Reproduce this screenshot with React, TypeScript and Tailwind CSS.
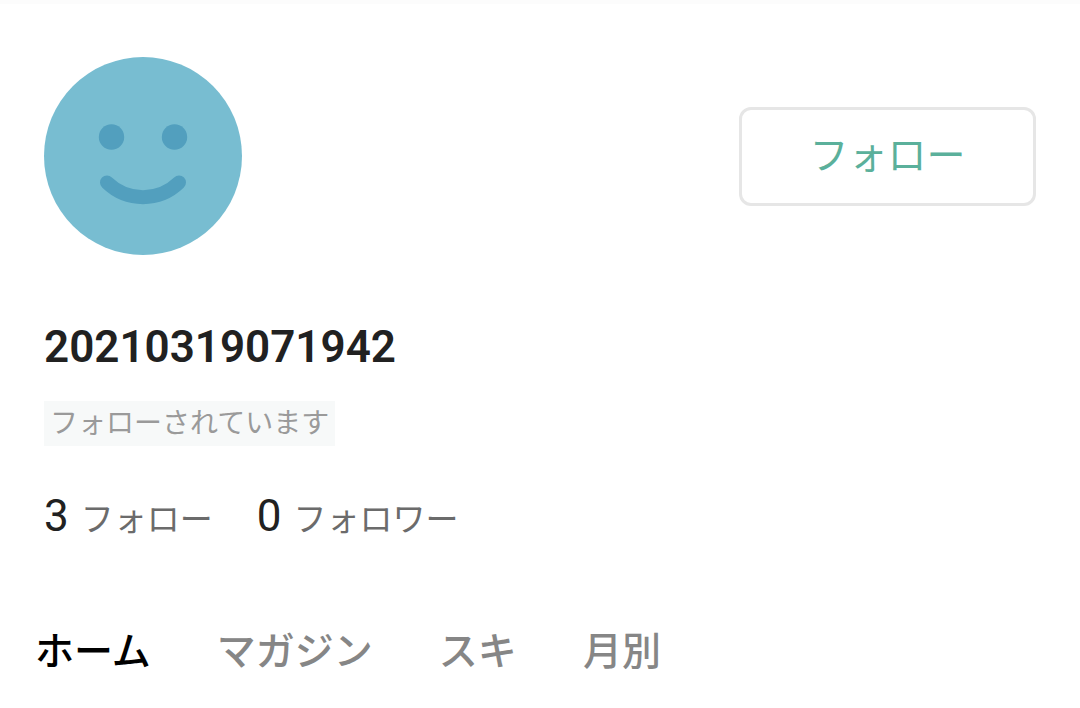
import React from 'react';

const TABS = [
  { id: 'home', label: 'ホーム' },
  { id: 'magazine', label: 'マガジン' },
  { id: 'likes', label: 'スキ' },
  { id: 'monthly', label: '月別' },
];

const STATS = [
  { count: 3, label: 'フォロー', href: '#followings' },
  { count: 0, label: 'フォロワー', href: '#followers' },
];

const Avatar: React.FC = () => (
  <svg viewBox="0 0 198 198" className="w-[198px] h-[198px] shrink-0" aria-hidden="true">
    <circle cx="99" cy="99" r="99" fill="#78bdd1" />
    <circle cx="67.5" cy="80" r="12.7" fill="#529fbe" />
    <circle cx="130.500" cy="80" r="12.7" fill="#529fbe" />
    <path d="M63 125.500C83 145 115 145 135 125.500" fill="none" stroke="#529fbe" strokeWidth="14" strokeLinecap="round" />
  </svg>
);

export default function App() {
  return (
    <div className="min-h-screen border-t-4 border-[#fcfcfc] bg-white font-[Roboto,'Noto_Sans_CJK_JP',sans-serif] text-[#212121]">
      <header className="px-11 pt-[53px]">
        <div className="flex items-center justify-between">
          <Avatar />
          <button className="h-[99px] w-[297px] rounded-xl border-3 border-[#e6e6e6] bg-white text-[39px] text-[#5bb09b]">
            フォロー
          </button>
        </div>

        <h1 className="mt-16 text-[44px] leading-14 font-semibold">20210319071942</h1>
        <p className="mt-[26px] w-fit bg-[#f7f9f9] px-1.5 text-[28px] leading-[45px] text-[#9a9a9a]">
          フォローされています
        </p>

        <div className="mt-[42px] flex gap-11">
          {STATS.map((stat) => (
            <a key={stat.label} href={stat.href} className="flex items-baseline gap-3 leading-14">
              <span className="text-[44px]">{stat.count}</span>
              <span className="text-[33px] text-[#6b6b6b]">{stat.label}</span>
            </a>
          ))}
        </div>
      </header>

      <nav className="mt-[76px] flex gap-[66px] px-[35px]">
        {TABS.map((tab, i) => (
          <a
            key={tab.id}
            href={`#${tab.id}`}
            aria-current={i === 0 ? 'page' : undefined}
            className={`text-[39px] leading-14 font-medium ${i === 0 ? 'text-black' : 'text-[#868686]'}`}
          >
            {tab.label}
          </a>
        ))}
      </nav>
    </div>
  );
}
